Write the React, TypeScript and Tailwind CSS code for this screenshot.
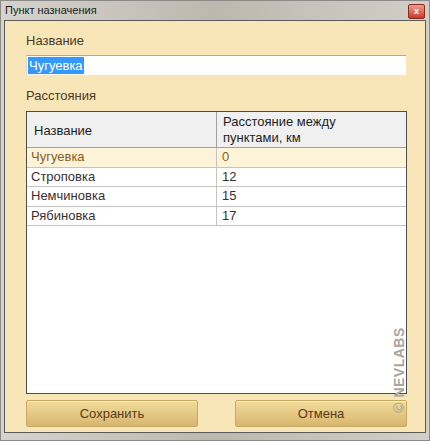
import React from 'react';

const rows = [
    { name: 'Чугуевка', dist: '0' },
    { name: 'Строповка', dist: '12' },
    { name: 'Немчиновка', dist: '15' },
    { name: 'Рябиновка', dist: '17' },
];

const App: React.FC = () => {
    return (
        <div
            className="relative w-[430px] h-[441px] overflow-hidden bg-[#8c8a86] p-[1px]"
            style={{ fontFamily: '"Liberation Sans", Arial, sans-serif' }}
        >
            <div className="flex flex-col w-full h-full bg-gradient-to-r from-[#d6d3cd] via-[#bdb8ae] to-[#d2cfc8]">
                {/* Title bar */}
                <div className="flex items-center justify-between h-[19px] pl-[4px] pr-[4px]">
                    <span className="text-[11px] text-[#1a1a1a] leading-none">Пункт назначения</span>
                    <div className="flex items-center justify-center w-[17px] h-[15px] mt-[1px] rounded-[2px] border border-[#8a2a20] bg-gradient-to-b from-[#ec9a8c] to-[#c8382a]">
                        <span className="text-[9px] font-bold text-white leading-none">x</span>
                    </div>
                </div>

                {/* Client area */}
                <div className="flex-1 mx-[3px] mb-[7px] border border-[#5a5a58] bg-[#f8e6b9] flex flex-col pl-[21px] pr-[18px] pt-[12px] pb-[4px]">
                    <div className="text-[13px] text-[#4a3a26] leading-[16px]">Название</div>
                    <div className="mt-[6px] mr-[1px] h-[20px] bg-white border-t border-[#a8a8a8] border-l border-l-[#d8d8d8] flex items-center pl-[1px]">
                        <span className="bg-[#3399ff] text-white text-[13px] leading-[17px] px-[1px]">Чугуевка</span>
                    </div>

                    <div className="mt-[13px] text-[13px] text-[#4a3a26] leading-[16px]">Расстояния</div>

                    <div className="mt-[7px] flex-1 border border-[#4c4c4c] bg-white flex flex-col">
                        <div className="flex h-[36px] bg-[#f0f0f0] border-b border-[#a0a0a0] text-[13px] text-[#1e1e1e]">
                            <div className="w-[190px] border-r border-[#a0a0a0] flex items-center pl-[7px] pt-[3px]">Название</div>
                            <div className="flex-1 flex items-center pl-[6px] leading-[16px]">
                                Расстояние между
                                <br />
                                пунктами, км
                            </div>
                        </div>
                        {rows.map((r, i) => (
                            <div
                                key={r.name}
                                className={`flex h-[19.5px] border-b border-[#c4c4c4] text-[13px] leading-[18px] ${
                                    i === 0 ? 'bg-[#fdf3d8] text-[#8a5e22]' : 'text-[#3a3030]'
                                }`}
                            >
                                <div className="w-[190px] border-r border-[#c4c4c4] pl-[4px]">{r.name}</div>
                                <div className="flex-1 pl-[5px]">{r.dist}</div>
                            </div>
                        ))}
                    </div>

                    <div className="mt-[6px] mb-[1px] flex justify-between">
                        {['Сохранить', 'Отмена'].map((t) => (
                            <button
                                key={t}
                                className="w-[172px] h-[27px] rounded-[2px] border border-[#c8a860] bg-gradient-to-b from-[#f2dc9c] to-[#d7b66e] text-[13px] text-[#5a3a1c] shadow-[inset_0_1px_0_#fbefc8]"
                            >
                                {t}
                            </button>
                        ))}
                    </div>
                </div>
            </div>

            {/* Watermark */}
            <div className="absolute left-[349px] top-[362px] w-[100px] h-[16px] -rotate-90 flex items-center justify-center text-[14px] font-bold text-[#a9a6a0] tracking-[0.5px] leading-none">
                © NEVLABS
            </div>
        </div>
    );
};

export default App;
